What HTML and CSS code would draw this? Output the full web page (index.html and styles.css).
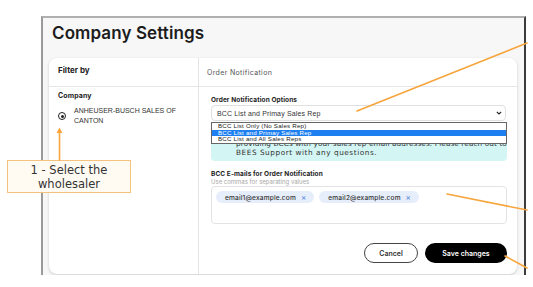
FILE: index.html
```html
<!DOCTYPE html>
<html lang="en">
<head>
  <meta charset="UTF-8" />
  <title>Company Settings</title>
  <link rel="stylesheet" href="styles.css">
</head>
<body>
  <div class="screen">
    <h1>Company Settings</h1>
    <div class="card">
      <div class="col col-filter">
        <div class="col-head"><span class="head-bold">Filter by</span></div>
        <div class="col-body">
          <div class="label">Company</div>
          <label class="radio-row">
            <span class="radio"></span>
            <span class="radio-text">ANHEUSER-BUSCH SALES OF CANTON</span>
          </label>
        </div>
      </div>
      <div class="col col-main">
        <div class="col-head"><span class="head-light">Order Notification</span></div>
        <div class="col-body main-body">
          <div class="label">Order Notification Options</div>
          <div class="select-wrap">
            <div class="select">
              <span>BCC List and Primay Sales Rep</span>
              <svg class="chev" width="6" height="4" viewBox="0 0 6 4"><path d="M0.8 0.8 L3 3 L5.2 0.8" fill="none" stroke="#222" stroke-width="1.1"/></svg>
            </div>
            <ul class="options">
              <li>BCC List Only (No Sales Rep)</li>
              <li class="active">BCC List and Primay Sales Rep</li>
              <li>BCC List and All Sales Reps</li>
            </ul>
          </div>
          <div class="info">
            <span class="info-line tight">providing BCCs with your sales rep email addresses. Please reach out to</span>
            <span class="info-line">BEES Support with any questions.</span>
          </div>
          <div class="label label-gap">BCC E-mails for Order Notification</div>
          <div class="hint">Use commas for separating values</div>
          <div class="emails">
            <span class="chip">email1@example.com <b>×</b></span>
            <span class="chip">email2@example.com <b>×</b></span>
          </div>
          <div class="actions">
            <button class="btn btn-cancel">Cancel</button>
            <button class="btn btn-save">Save changes</button>
          </div>
        </div>
      </div>
    </div>
  </div>

  <div class="callout">1 - Select the<br>wholesaler</div>

  <svg class="marks" width="533" height="287" viewBox="0 0 533 287">
    <g stroke="#f7a53c" stroke-width="1.6" fill="none" stroke-linecap="round">
      <line x1="357" y1="111" x2="527" y2="43"/>
      <line x1="447" y1="194" x2="527" y2="210"/>
      <line x1="505" y1="256" x2="527" y2="268"/>
      <line x1="59.5" y1="160" x2="59.5" y2="131"/>
    </g>
    <path d="M56.5 133 L59.5 127.5 L62.5 133 Z" fill="#f7a53c"/>
  </svg>
</body>
</html>
```

FILE: styles.css
```css
body {
  margin: 0;
  background: #fff;
  font-family: Inter, "Liberation Sans", sans-serif;
  color: #222;
}
.screen {
  box-sizing: border-box;
  margin: 16px 0 0 41px;
  width: 485px;
  height: 259px;
  background: #f7f7f7;
  border-top: 2px solid #b0b0b0;
  border-left: 2px solid #9a9a9a;
  border-right: 2px solid #3c3c3c;
  padding: 4px 7px 0 6px;
  overflow: hidden;
}
h1 {
  margin: 0 0 0 3px;
  font-size: 17px;
  line-height: 22px;
  font-weight: 600;
  color: #1c1c1c;
  letter-spacing: 0.1px;
}
.card {
  margin-top: 14px;
  height: 216px;
  background: #fff;
  border-radius: 8px;
  box-shadow: 0 1px 3px rgba(0, 0, 0, 0.18);
  display: grid;
  grid-template-columns: 150px minmax(0, 1fr);
}
.col {
  display: flex;
  flex-direction: column;
  min-width: 0;
}
.col-filter {
  border-right: 1px solid #e4e4e4;
}
.col-head {
  box-sizing: border-box;
  height: 29px;
  border-bottom: 1px solid #e6e6e6;
  display: flex;
  align-items: center;
  padding-left: 9px;
}
.col-filter .col-head {
  padding-bottom: 4px;
}
.col-main .col-head {
  padding-left: 8px;
  padding-top: 1px;
}
.head-bold {
  font-size: 8px;
  font-weight: 700;
  color: #222;
}
.head-light {
  font-size: 7px;
  color: #555;
  letter-spacing: 0.35px;
}
.col-body {
  padding: 5px 8px 0 9px;
}
.label {
  font-size: 6.5px;
  line-height: 8px;
  font-weight: 700;
  color: #222;
  letter-spacing: 0.1px;
}
.col-filter .label {
  font-size: 7px;
}
.radio-row {
  display: flex;
  align-items: center;
  gap: 8px;
  margin-top: 6px;
}
.radio {
  flex: none;
  box-sizing: border-box;
  width: 8px;
  height: 8px;
  border: 1px solid #222;
  border-radius: 50%;
  display: flex;
  align-items: center;
  justify-content: center;
}
.radio::after {
  content: "";
  width: 3px;
  height: 3px;
  border-radius: 50%;
  background: #222;
}
.radio-text {
  font-family: "Liberation Sans", Arial, sans-serif;
  font-size: 7px;
  line-height: 10px;
  color: #333;
  max-width: 112px;
}
.main-body {
  position: relative;
  padding: 9px 11px 0 12px;
}
.select-wrap {
  position: relative;
  margin-top: 1px;
  z-index: 2;
}
.select {
  box-sizing: border-box;
  height: 16px;
  border: 1px solid #e0e0e0;
  border-radius: 4px;
  display: flex;
  align-items: center;
  justify-content: space-between;
  padding: 0 3px 0 5px;
  font-family: "Liberation Sans", Arial, sans-serif;
  font-size: 7px;
  letter-spacing: 0.15px;
  color: #333;
}
.options {
  position: absolute;
  left: 0;
  right: -1px;
  top: 17px;
  margin: 0;
  padding: 0;
  list-style: none;
  background: #fff;
  border: 1px solid #666;
  font-family: "Liberation Sans", Arial, sans-serif;
  font-size: 6.2px;
  letter-spacing: 0.2px;
  color: #222;
}
.options li {
  height: 6.6px;
  line-height: 6.6px;
  padding-left: 6px;
  overflow: hidden;
}
.options li.active {
  background: #1e80f0;
  color: #fff;
}
.info {
  box-sizing: border-box;
  height: 33px;
  margin-top: 7px;
  margin-right: -1px;
  background: #d3f5f3;
  border-radius: 4px;
  padding: 11px 6px 0 25px;
  font-family: "DejaVu Sans", sans-serif;
  font-size: 7.3px;
  line-height: 9px;
  color: #333;
  letter-spacing: 0.55px;
  white-space: nowrap;
  overflow: hidden;
}
.info-line {
  display: block;
}
.info-line.tight {
  letter-spacing: 0.1px;
}
.label-gap {
  margin-top: 9px;
}
.hint {
  font-size: 6px;
  line-height: 8px;
  color: #a8a8a8;
}
.emails {
  box-sizing: border-box;
  height: 38px;
  margin-right: -1px;
  border: 1px solid #e3e3e3;
  border-radius: 4px;
  padding: 4px 4px;
  display: flex;
  align-items: flex-start;
  gap: 5px;
}
.chip {
  height: 12px;
  padding: 0 8px 0 9px;
  border-radius: 6px;
  background: #e6eefb;
  font-size: 6.6px;
  font-weight: 500;
  line-height: 12px;
  color: #333;
  letter-spacing: 0.15px;
}
.chip b {
  margin-left: 3px;
  color: #4a7fe0;
  font-weight: 400;
  font-size: 8px;
}
.actions {
  margin-top: 19px;
  margin-right: -1px;
  display: flex;
  justify-content: flex-end;
  gap: 7px;
}
.btn {
  height: 20px;
  border-radius: 10px;
  font-family: Inter, sans-serif;
  font-size: 7px;
  font-weight: 600;
  padding: 0;
}
.btn-cancel {
  width: 54px;
  background: #fff;
  border: 1px solid #444;
  color: #333;
}
.btn-save {
  width: 82px;
  background: #000;
  border: none;
  color: #fff;
}
.callout {
  position: absolute;
  left: 7px;
  top: 160px;
  box-sizing: border-box;
  width: 124px;
  height: 33px;
  border: 1px solid #f5c27d;
  background: #fffbf3;
  font-family: "DejaVu Sans", sans-serif;
  font-size: 11.5px;
  line-height: 14px;
  color: #333;
  text-align: center;
  padding-top: 2px;
  z-index: 3;
}
.marks {
  position: absolute;
  left: 0;
  top: 0;
  pointer-events: none;
  z-index: 4;
}
```
